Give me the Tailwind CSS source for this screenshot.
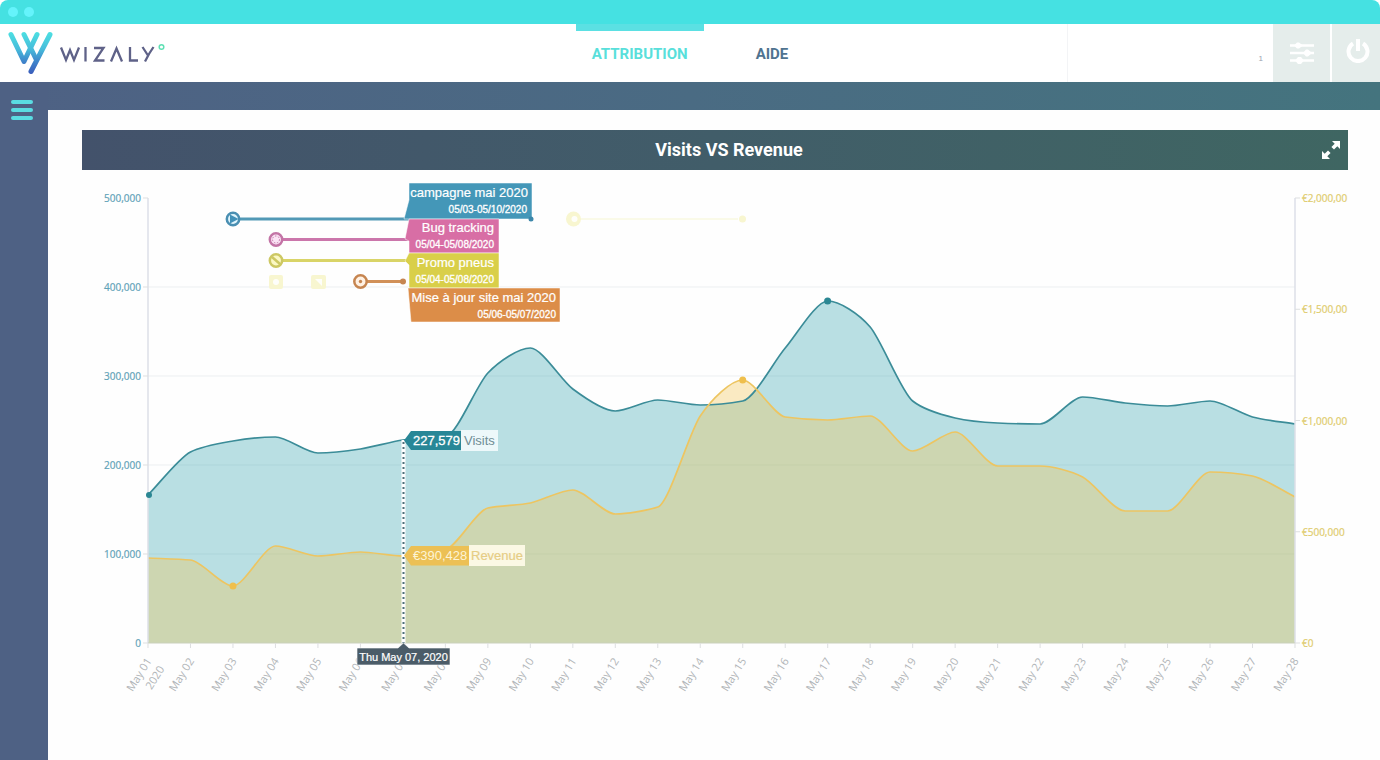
<!DOCTYPE html>
<html lang="fr">
<head>
<meta charset="utf-8">
<meta name="viewport" content="width=device-width, initial-scale=1">
<title>Wizaly – Attribution</title>
<script src="https://cdn.jsdelivr.net/npm/@tailwindcss/browser@4"></script>
</head>
<body class="bg-white">
<div class="flex min-h-screen flex-col overflow-hidden rounded-t-lg font-['Liberation_Sans',sans-serif]">
  <div class="flex h-6 items-center gap-1 bg-[#45e1e2] px-2">
    <span class="size-2.5 rounded-full bg-[#65f3fb]"></span>
    <span class="ml-0.5 size-2.5 rounded-full bg-[#65f3fb]"></span>
  </div>

  <header class="grid h-[58px] grid-cols-[1fr_auto_1fr] bg-white">
    <a href="#" aria-label="Wizaly" class="flex items-center pl-2">
      <svg class="h-[50px] w-[158px]" viewBox="8 28 158 50" fill="none" stroke-linecap="round" stroke-linejoin="round">
        <defs>
          <linearGradient id="mark" gradientUnits="userSpaceOnUse" x1="0" y1="32" x2="0" y2="74">
            <stop offset="0" stop-color="#4de0e2"/><stop offset=".4" stop-color="#47bddb"/><stop offset=".7" stop-color="#3f85cb"/><stop offset="1" stop-color="#3a5cbb"/>
          </linearGradient>
        </defs>
        <g stroke="url(#mark)" stroke-width="5">
          <path d="M11 34.500L24 61.500L37 34.500"/>
          <path d="M24 34.500L36 59"/>
          <path d="M50 34.500L31 71.500"/>
        </g>
        <g stroke="#5f6288" stroke-width="2.300" stroke-linecap="butt" stroke-linejoin="miter">
          <path d="M61 47.500L66 60L70 50L74 60L79 47.500"/>
          <path d="M85.500 47V61.500"/>
          <path d="M94 48H103.500L95 60.500H104.500"/>
          <path d="M111 61.500L116.500 48.500L122 61.500"/>
          <path d="M130 47V60.500H138"/>
          <path d="M142.500 47L148 55.500L153.500 47M149 54L145 61.500"/>
        </g>
        <circle cx="161.500" cy="47" r="2.300" stroke="#5fe0b4" stroke-width="1.500"/>
      </svg>
    </a>
    <nav class="flex gap-9 font-['Roboto','Liberation_Sans',sans-serif] text-[15px] font-bold">
      <a href="#" aria-current="page" class="flex items-center border-t-[7px] border-[#5be0e3] px-4 pb-1 text-[#59dfdb]">ATTRIBUTION</a>
      <a href="#" class="flex items-center border-t-[7px] border-transparent px-4 pb-1 text-[#4f7390]">AIDE</a>
    </nav>
    <div class="flex justify-end gap-0.5">
      <div class="flex w-[204px] items-center justify-end border-l border-gray-100 pr-2 pt-3 text-[8px] text-gray-400">1</div>
      <button type="button" aria-label="Filtres" class="grid w-[57px] place-items-center bg-[#e5edeb]">
        <svg class="size-6" viewBox="0 0 24 24" stroke="#fff" stroke-width="2.500" fill="#fff">
          <path d="M0 4.500H24M0 12H24M0 19.500H24"/>
          <g stroke="none"><path d="M4 4.500L7 1.500H9L13 4.500L9 7.500H7ZM13 12L16 8.500H18L22 12L18 15.500H16ZM5 19.500L8 16H11L14 19.500L11 23H8Z"/></g>
        </svg>
      </button>
      <button type="button" aria-label="Déconnexion" class="flex w-12 items-center justify-end bg-[#e5edeb] pr-2.5 pb-1">
        <svg class="size-6" viewBox="0 0 24 24" stroke="#fff" stroke-width="4" fill="none">
          <path d="M7 4.500A9.500 9.500 0 1 0 17 4.500M12 0V12"/>
        </svg>
      </button>
    </div>
  </header>

  <div class="flex flex-1 bg-linear-to-r from-[#4e6184] via-[#4a6b83] to-[#44747e]">
    <aside class="w-12 shrink-0 bg-[#4e6184] pt-[18px] pl-[11px]">
      <button type="button" aria-label="Menu" class="flex w-[22px] flex-col gap-1">
        <span class="h-1 w-full rounded-xs bg-[#5adce2]"></span>
        <span class="h-1 w-full rounded-xs bg-[#5adce2]"></span>
        <span class="h-1 w-full rounded-xs bg-[#5adce2]"></span>
      </button>
    </aside>
    <main class="mt-7 min-w-0 flex-1 bg-[#fefefe] pt-5 pr-8 pl-[34px]">
      <section>
        <div class="grid h-10 grid-cols-[1fr_auto_1fr] items-center bg-linear-to-r from-[#43526b] via-[#415d69] to-[#3f6662] px-2">
          <h1 class="col-start-2 pb-0.5 pl-7 font-['Roboto','Liberation_Sans',sans-serif] text-[18px] font-bold text-white">Visits VS Revenue</h1>
          <button type="button" aria-label="Agrandir" class="justify-self-end">
            <svg class="size-[18px]" viewBox="0 0 18 18" fill="#fff"><path d="M10 0H18V8L15.300 5.300L12 8.600L9.400 6L12.700 2.700ZM8 18H0V10L2.700 12.700L6 9.400L8.600 12L5.300 15.300Z"/></svg>
          </button>
        </div>
        <svg id="chart" class="block w-full" viewBox="82 170 1266 550" font-family="'Liberation Sans',sans-serif" role="img" aria-label="Visits VS Revenue">
          <g id="grid" stroke="#eceff1"></g>
          <path id="visits-area" fill="#1b98a6" fill-opacity=".3"/>
          <path id="revenue-area" fill="#f3c552" fill-opacity=".35"/>
          <path id="visits-line" fill="none" stroke="#3b8c98" stroke-width="1.700"/>
          <path id="revenue-line" fill="none" stroke="#edc561" stroke-width="1.700"/>
          <path d="M148 198V643M1295 198V643" stroke="#dddfe8" stroke-width="1.500"/>
          <path d="M148 643H1295" stroke="#c9d0bb" stroke-width="1"/>
          <g id="ticks" stroke="#dddfe0"></g>
          <g fill="#2b8793"><circle cx="149" cy="495" r="3"/><circle cx="827.600" cy="301" r="3.500"/></g>
          <g fill="#efbf4c"><circle cx="233" cy="586" r="3.500"/><circle cx="742.700" cy="380" r="3.500"/></g>
          <g id="left-labels" font-family="'Open Sans',sans-serif" font-size="10" fill="#5fa2b8" stroke="#5fa2b8" stroke-width=".2" text-anchor="end"></g>
          <g id="right-labels" font-family="'Open Sans',sans-serif" font-size="10" fill="#e0cc6c" stroke="#e0cc6c" stroke-width=".2"></g>
          <g id="day-labels" font-family="'Open Sans',sans-serif" font-size="11" fill="#b1b5b8" text-anchor="end"></g>

          <!-- Event timeline -->
          <g stroke-width="3">
            <path d="M240 219H410" stroke="#5299b6"/>
            <path d="M283 239.500H410" stroke="#cb76ab"/>
            <path d="M283 260.500H410" stroke="#d9d467"/>
            <path d="M367 281.500H403" stroke="#d19058"/>
          </g>
          <g fill="#fff" stroke-width="2.500">
            <circle cx="233" cy="219" r="6.200" stroke="#4a8fb2" fill="#dff4fc"/>
            <circle cx="276" cy="239.500" r="6.200" stroke="#c374a6" fill="#fbe3f5"/>
            <circle cx="276" cy="260.500" r="6.200" stroke="#cdc863" fill="#fbf8c4"/>
            <circle cx="360.500" cy="281.500" r="6.200" stroke="#c68550" fill="#fff1e3"/>
          </g>
          <path d="M230 214.500L238.500 219L230 223.500Z" fill="#4291b8"/>
          <circle cx="276" cy="239.500" r="3.500" fill="none" stroke="#c374a6" stroke-dasharray="1.500 1.500"/>
          <path d="M272 257L280 264" stroke="#cdc863" stroke-width="2.500"/>
          <circle cx="360.500" cy="281.500" r="1.700" fill="#c68550"/>
          <circle cx="403" cy="281.500" r="3" fill="#c68550"/>
          <g fill="#f8f6d0">
            <rect x="269" y="275" width="14" height="14" rx="2"/><rect x="311" y="275" width="15" height="14" rx="2"/>
            <circle cx="573.500" cy="219" r="7.500"/><circle cx="742.500" cy="219" r="3.500"/>
          </g>
          <g fill="#fefefa"><circle cx="276" cy="282" r="3"/><path d="M315 279H322V286Z"/><circle cx="574.500" cy="219" r="3"/></g>
          <path d="M581 219H738" stroke="#fafae8" stroke-width="2"/>
          <g stroke="#fff" stroke-opacity=".5">
            <path d="M409 183H532V219H409L404 219L409 200Z" fill="#4497b8"/>
            <path d="M409 219H499V253H409V241L405 239Z" fill="#d86ea5"/>
            <path d="M409 253H499V288H409V265L405 261Z" fill="#d9cf49"/>
            <path d="M411 288H560V322H411L408 288Z" fill="#dc8d48"/>
          </g>
          <circle cx="531" cy="219" r="2.500" fill="#3c87aa"/>
          <g fill="#fff" stroke="#fff" stroke-width=".2" font-size="13" text-anchor="end">
            <text x="528" y="197">campagne mai 2020</text>
            <text x="494" y="232">Bug tracking</text>
            <text x="494" y="267">Promo pneus</text>
            <text x="556" y="302">Mise à jour site mai 2020</text>
          </g>
          <g fill="#fff" stroke="#fff" stroke-width=".3" font-size="10" text-anchor="end">
            <text x="527" y="213">05/03-05/10/2020</text>
            <text x="494" y="248">05/04-05/08/2020</text>
            <text x="494" y="283">05/04-05/08/2020</text>
            <text x="556" y="318">05/06-05/07/2020</text>
          </g>

          <!-- Cursor and its balloons -->
          <path d="M403.500 440V643" stroke="#fff" stroke-width="4"/>
          <path d="M403.500 442V643" stroke="#4d6f78" stroke-width="2" stroke-dasharray="2 3"/>
          <rect x="461" y="430" width="37" height="21" fill="#edf8fa"/>
          <path d="M404 440.500L411 431H461V450H411Z" fill="#288797"/>
          <rect x="469" y="545" width="56" height="21" fill="#fbf8e4"/>
          <path d="M404 555.500L411 546H469V565.500H411Z" fill="#ecc055"/>
          <g font-size="13">
            <text x="413" y="445" fill="#fff" stroke="#fff" stroke-width=".3">227,579</text>
            <text x="464" y="445" fill="#6f8d95">Visits</text>
            <text x="413" y="560" fill="#fdf4d4">€390,428</text>
            <text x="471" y="560" fill="#e6cd85" stroke="#e6cd85" stroke-width=".2">Revenue</text>
          </g>
          <path d="M357 648H398L403.500 643L409 648H450V665H357Z" fill="#4b5c68" stroke="#fff" stroke-opacity=".6"/>
          <text x="403.500" y="661" font-size="11" fill="#fff" stroke="#fff" stroke-width=".2" text-anchor="middle">Thu May 07, 2020</text>
        </svg>
      </section>
    </main>
  </div>
</div>
<script>
  const visits = [495,452,441,437,453,449,440,437,373,348,389,411,400,405,401,348,301,327,401,418,423,424,397,403,406,401,417,424];
  const revenue = [558,560,586,546,556,552,556,550,508,503,490,514,507,416,380,417,420,416,451,432,466,466,477,511,511,472,476,497];
  const left = 148, step = (1295 - left) / 27, base = 643;
  const byId = id => document.getElementById(id);

  // Monotone cubic interpolation through the daily values, with short handles
  function curve(ys) {
    const slope = ys.slice(1).map((y, i) => (y - ys[i]) / step);
    const m = ys.map((_, i) => {
      if (i === 0) return slope[0];
      if (i === ys.length - 1) return slope[i - 1];
      const a = slope[i - 1], b = slope[i];
      return (Math.sign(a) + Math.sign(b)) * Math.min(Math.abs(a), Math.abs(b), Math.abs(a + b) / 4);
    });
    let d = `M${left} ${ys[0]}`;
    for (let i = 1; i < ys.length; i++) {
      const x0 = left + (i - 1) * step, x1 = left + i * step, t = step * 0.27;
      d += `C${x0 + t} ${ys[i - 1] + m[i - 1] * t} ${x1 - t} ${ys[i] - m[i] * t} ${x1} ${ys[i]}`;
    }
    return d;
  }
  for (const [name, ys] of [['visits', visits], ['revenue', revenue]]) {
    const d = curve(ys);
    byId(name + '-line').setAttribute('d', d);
    byId(name + '-area').setAttribute('d', d + `V${base}H${left}Z`);
  }

  let grid = '', ticks = '', days = '', ll = '', rl = '';
  ['0', '100,000', '200,000', '300,000', '400,000', '500,000'].forEach((t, i) => {
    const y = base - i * 89;
    if (i > 0 && i < 5) grid += `<path d="M148 ${y}H1295"/>`;
    ticks += `<path d="M143 ${y}H148"/>`;
    ll += `<text x="141" y="${y + 4}">${t}</text>`;
  });
  ['€0', '€500,000', '€1,000,00', '€1,500,00', '€2,000,00'].forEach((t, i) => {
    const y = base - i * 111.25;
    ticks += `<path d="M1295 ${y}H1300"/>`;
    rl += `<text x="1302" y="${y + 4}">${t}</text>`;
  });
  for (let i = 0; i < 28; i++) {
    const x = left + i * step;
    ticks += `<path d="M${x} 643V648"/>`;
    const second = i === 0 ? '<tspan x="0" dy="15">2020</tspan>' : '';
    days += `<text transform="translate(${x + 4} 661) rotate(-58)">May ${String(i + 1).padStart(2, '0')}${second}</text>`;
  }
  byId('grid').innerHTML = grid;
  byId('ticks').innerHTML = ticks;
  byId('left-labels').innerHTML = ll;
  byId('right-labels').innerHTML = rl;
  byId('day-labels').innerHTML = days;
</script>
</body>
</html>
